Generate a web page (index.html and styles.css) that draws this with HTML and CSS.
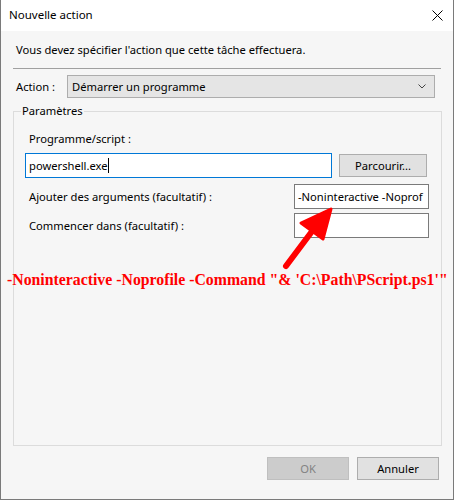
FILE: index.html
```html
<!DOCTYPE html>
<html lang="fr">
<head>
<meta charset="utf-8">
<title>Nouvelle action</title>
<link rel="stylesheet" href="styles.css">
</head>
<body>
<div class="window">
  <div class="titlebar">
    <span class="title">Nouvelle action</span>
    <svg class="close" width="11" height="11" viewBox="0 0 11 11"><path d="M0.5 0.5 L10.5 10.5 M10.5 0.5 L0.5 10.5" stroke="#000" stroke-width="1" fill="none"/></svg>
  </div>
  <div class="content">
    <p class="intro">Vous devez spécifier l'action que cette tâche effectuera.</p>
    <div class="sep"></div>
    <div class="action-row">
      <span class="action-lbl">Action :</span>
      <div class="select">
        <span>Démarrer un programme</span>
        <svg class="chev" width="8" height="5" viewBox="0 0 8 5"><path d="M0.5 0.5 L4 4 L7.5 0.5" stroke="#444" stroke-width="1" fill="none"/></svg>
      </div>
    </div>
    <fieldset class="group">
      <legend>Paramètres</legend>
      <div class="prog-lbl">Programme/script :</div>
      <div class="prog-row">
        <div class="input focused">powershell.exe<span class="caret"></span></div>
        <div class="btn browse">Parcourir...</div>
      </div>
      <div class="field-row">
        <span class="field-lbl">Ajouter des arguments (facultatif) :</span>
        <div class="input small">-Noninteractive -Noprof</div>
      </div>
      <div class="field-row second">
        <span class="field-lbl">Commencer dans (facultatif) :</span>
        <div class="input small"></div>
      </div>
    </fieldset>
    <div class="buttons">
      <div class="btn ok">OK</div>
      <div class="btn cancel">Annuler</div>
    </div>
  </div>
  <svg class="arrow" width="454" height="500" viewBox="0 0 454 500">
    <path d="M286 266 L313 230" stroke="#ff0000" stroke-width="6" stroke-linecap="round" fill="none"/>
    <path d="M331 209 L301 223 L323 239 Z" fill="#ff0000" stroke="#ff0000" stroke-width="3" stroke-linejoin="round"/>
  </svg>
  <div class="note">-Noninteractive -Noprofile -Command "&amp; 'C:\Path\PScript.ps1'"</div>
</div>
</body>
</html>
```
FILE: styles.css
```css
* { box-sizing: border-box; }
html, body { margin: 0; padding: 0; }
body {
  font-family: "Noto Sans", "Liberation Sans", sans-serif;
  font-size: 11.2px;
  color: #000;
  background: #f6f6f6;
}
.window {
  position: relative;
  width: 454px;
  height: 500px;
  border: 1px solid #7a7a7a;
  border-top: none;
  background: #f6f6f6;
  display: flex;
  flex-direction: column;
}
.titlebar {
  height: 31px;
  background: #fff;
  display: flex;
  align-items: center;
  justify-content: space-between;
  padding: 0 10px 1px 8px;
  flex-shrink: 0;
}
.title { font-size: 11.5px; line-height: 16px; }
.close { display: block; }
.content {
  padding: 0 11px 0 12px;
  display: flex;
  flex-direction: column;
}
.intro {
  margin: 11px 0 0 3px;
  line-height: 16px;
}
.sep {
  height: 1px;
  background: #a0a0a0;
  margin-top: 10px;
  margin-right: 1px;
}
.action-row {
  margin-top: 6px;
  display: flex;
  align-items: center;
  height: 23px;
}
.action-lbl {
  width: 54px;
  padding-left: 3px;
  line-height: 16px;
}
.select {
  flex: 0 0 368px;
  height: 23px;
  background: #e5e5e5;
  border: 1px solid #adadad;
  display: flex;
  align-items: center;
  justify-content: space-between;
  padding: 0 8px 0 4px;
  line-height: 16px;
}
.chev { display: block; }
.group {
  margin: 5px 0 0 0;
  padding: 12px 13px 0 11px;
  border: 1px solid #dcdcdc;
  height: 343px;
  min-width: 0;
}
.group legend {
  padding: 0 1px;
  margin-left: -4px;
  line-height: 16px;
}
.prog-lbl {
  margin-left: 4px;
  line-height: 16px;
}
.prog-row {
  margin-top: 6px;
  display: flex;
  align-items: center;
  gap: 7px;
}
.input {
  height: 25px;
  background: #fff;
  border: 1px solid #7a7a7a;
  display: flex;
  align-items: center;
  padding: 0 3px;
  white-space: nowrap;
  overflow: hidden;
  line-height: 16px;
}
.input.focused {
  width: 307px;
  border-color: #0078d7;
}
.caret {
  display: inline-block;
  width: 1px;
  height: 15px;
  background: #000;
  margin-left: 0;
}
.btn {
  height: 23px;
  background: #e1e1e1;
  border: 1px solid #adadad;
  display: flex;
  align-items: center;
  justify-content: center;
  line-height: 16px;
}
.browse { width: 88px; }
.field-row {
  margin-top: 6px;
  display: flex;
  align-items: center;
  justify-content: space-between;
}
.field-row.second { margin-top: 4px; }
.field-lbl {
  margin-left: 4px;
  line-height: 16px;
}
.input.small {
  width: 135px;
  margin-right: -1px;
}
.buttons {
  margin-top: 11px;
  display: flex;
  justify-content: flex-end;
  gap: 8px;
  padding-right: 3px;
}
.buttons .btn { width: 82px; }
.ok {
  background: #cccccc;
  border-color: #bfbfbf;
  color: #838383;
}
.arrow {
  position: absolute;
  left: -1px;
  top: 0;
  pointer-events: none;
}
.note {
  position: absolute;
  left: 6px;
  top: 270px;
  font-family: "Liberation Serif", "Times New Roman", serif;
  font-weight: bold;
  font-size: 15.8px;
  line-height: 20px;
  color: #ff0000;
  white-space: nowrap;
}
```
